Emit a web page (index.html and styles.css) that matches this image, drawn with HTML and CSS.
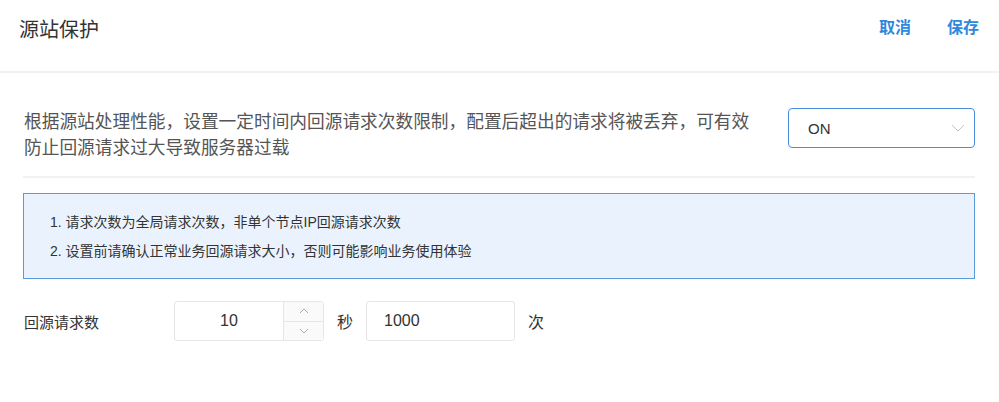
FILE: index.html
```html
<!DOCTYPE html>
<html lang="zh-CN">
<head>
    <meta charset="UTF-8">
    <meta name="viewport" content="width=device-width, initial-scale=1.0">
    <title>源站保护</title>
    <link rel="stylesheet" href="styles.css">
</head>
<body>
    <div class="header">
        <div class="title">源站保护</div>
        <div class="actions">
            <a class="action">取消</a>
            <a class="action">保存</a>
        </div>
    </div>

    <div class="content">
        <div class="switch-row">
            <div class="desc">根据源站处理性能，设置一定时间内回源请求次数限制，配置后超出的请求将被丢弃，可有效防止回源请求过大导致服务器过载</div>
            <div class="select">
                <span>ON</span>
                <svg class="chevron" width="14" height="8" viewBox="0 0 14 8"><path d="M1 1l6 6 6-6" fill="none" stroke="#c4c4c4" stroke-width="1"/></svg>
            </div>
        </div>

        <div class="notice">
            <p>1. 请求次数为全局请求次数，非单个节点IP回源请求次数</p>
            <p>2. 设置前请确认正常业务回源请求大小，否则可能影响业务使用体验</p>
        </div>

        <div class="form-row">
            <label class="label">回源请求数</label>
            <div class="number-input">
                <span class="value">10</span>
                <div class="stepper">
                    <span class="step"><svg width="10" height="6" viewBox="0 0 10 6"><path d="M1 5l4-4 4 4" fill="none" stroke="#aaa" stroke-width="1"/></svg></span>
                    <span class="step"><svg width="10" height="6" viewBox="0 0 10 6"><path d="M1 1l4 4 4-4" fill="none" stroke="#aaa" stroke-width="1"/></svg></span>
                </div>
            </div>
            <span class="unit">秒</span>
            <div class="text-input">1000</div>
            <span class="unit">次</span>
        </div>
    </div>
</body>
</html>
```

FILE: styles.css
```css
body {
    margin: 0;
    background: #fff;
    color: #333;
    font-family: "Helvetica", "Liberation Sans", "Noto Sans CJK SC", sans-serif;
}

.header {
    height: 56px;
    display: flex;
    align-items: flex-start;
    justify-content: space-between;
    padding: 15px 20px 0 19px;
    border-bottom: 2px solid #f2f2f2;
}

.title {
    font-size: 20px;
    line-height: 30px;
    color: #333;
}

.actions {
    display: flex;
    gap: 36px;
    margin-top: 2px;
}

.action {
    color: #2f88dc;
    font-size: 16px;
    line-height: 22px;
    font-weight: bold;
    cursor: pointer;
}

.content {
    padding: 0 24px 0 23px;
}

.switch-row {
    display: flex;
    justify-content: space-between;
    padding: 36px 0 15px;
    border-bottom: 2px solid #f2f2f2;
}

.desc {
    width: 730px;
    font-size: 17.7px;
    line-height: 26px;
    color: #555;
    padding: 0 0 0 1px;
}

.select {
    width: 185px;
    height: 38px;
    border: 1px solid #4a8fdc;
    border-radius: 4px;
    display: flex;
    align-items: center;
    justify-content: space-between;
    font-size: 15px;
    margin-top: -1px;
}

.select span {
    padding-left: 19px;
}

.chevron {
    margin-right: 9px;
}

.notice {
    margin-top: 15px;
    background: #eaf3fd;
    border: 1px solid #5a9ad8;
    padding: 14px 26px 12px;
    font-size: 14px;
}

.notice p {
    margin: 0;
    line-height: 29px;
}

.form-row {
    display: flex;
    align-items: center;
    margin-top: 22px;
    font-size: 16px;
}

.label {
    width: 150px;
    font-size: 15px;
    padding-left: 1px;
}

.number-input {
    width: 148px;
    height: 38px;
    border: 1px solid #e6e6e6;
    border-radius: 3px;
    display: flex;
}

.value {
    flex: 1;
    display: flex;
    align-items: center;
    justify-content: center;
}

.stepper {
    width: 39px;
    border-left: 1px solid #e6e6e6;
    background: #fafafa;
    display: flex;
    flex-direction: column;
}

.step {
    flex: 1;
    display: flex;
    align-items: center;
    justify-content: center;
}

.step + .step {
    border-top: 1px solid #e6e6e6;
}

.unit {
    margin: 0 13px;
}

.text-input {
    width: 130px;
    height: 38px;
    border: 1px solid #e6e6e6;
    border-radius: 3px;
    display: flex;
    align-items: center;
    padding-left: 17px;
}
```
